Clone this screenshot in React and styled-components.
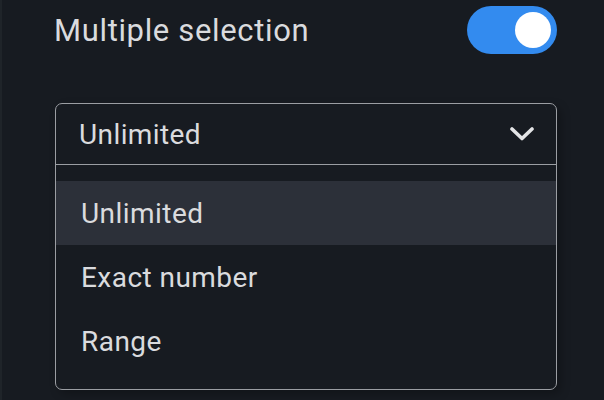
import React, { useState } from "react";
import styled, { createGlobalStyle } from "styled-components";

const GlobalStyle = createGlobalStyle`
  html, body {
    margin: 0;
    padding: 0;
    background: #171b21;
  }
  body {
    font-family: Roboto, "Noto Sans", "Liberation Sans", sans-serif;
    -webkit-font-smoothing: antialiased;
  }
`;

const Page = styled.div`
  width: 604px;
  height: 400px;
  box-sizing: border-box;
  border-left: 2px solid #1f2429;
  background: #171b21;
  padding: 0 47px 0 53px;
  overflow: hidden;
`;

const SettingRow = styled.div`
  height: 60px;
  display: flex;
  align-items: center;
  justify-content: space-between;
`;

const Label = styled.span`
  font-size: 31px;
  color: #dadbde;
  letter-spacing: 0.65px;
  margin-left: -1px;
`;

const Toggle = styled.button`
  width: 90px;
  height: 48px;
  border: none;
  border-radius: 24px;
  padding: 6px;
  display: flex;
  align-items: center;
  justify-content: ${p => (p.on ? "flex-end" : "flex-start")};
  background: ${p => (p.on ? "#338bef" : "#3a3f47")};
  cursor: pointer;
`;

const Knob = styled.span`
  width: 36px;
  height: 36px;
  border-radius: 50%;
  background: #ffffff;
`;

const Dropdown = styled.div`
  margin-top: 43px;
  height: 287px;
  box-sizing: border-box;
  border: 1.5px solid #9b9ea3;
  border-radius: 7px;
  background: #171b21;
  box-shadow: 4px 4px 10px rgba(0, 0, 0, 0.25);
  display: flex;
  flex-direction: column;
`;

const SelectHead = styled.div`
  height: 61px;
  flex-shrink: 0;
  box-sizing: border-box;
  border-bottom: 1.5px solid #9b9ea3;
  display: flex;
  align-items: center;
  justify-content: space-between;
  padding: 0 22px 0 23px;
  font-size: 28px;
  letter-spacing: 0.4px;
  color: #dadbde;
`;

const OptionList = styled.ul`
  list-style: none;
  margin: 0;
  padding: 16px 0;
`;

const Option = styled.li`
  height: 64px;
  display: flex;
  align-items: center;
  padding-left: 25px;
  font-size: 28px;
  letter-spacing: 0.45px;
  color: #dadbde;
  background: ${p => (p.active ? "#2c3039" : "transparent")};
`;

const Chevron = () => (
  <svg width="24" height="14" viewBox="0 0 24 14" fill="none">
    <path d="M2 2l10 9.5L22 2" stroke="#e3e4e6" strokeWidth="3.6" strokeLinecap="round" strokeLinejoin="round" />
  </svg>
);

const options = ["Unlimited", "Exact number", "Range"];

export default function App() {
  const [on, setOn] = useState(true);
  const [value] = useState("Unlimited");
  return (
    <Page>
      <GlobalStyle />
      <SettingRow>
        <Label>Multiple selection</Label>
        <Toggle on={on} onClick={() => setOn(!on)}>
          <Knob />
        </Toggle>
      </SettingRow>
      <Dropdown>
        <SelectHead>
          {value}
          <Chevron />
        </SelectHead>
        <OptionList>
          {options.map(o => (
            <Option key={o} active={o === value}>
              {o}
            </Option>
          ))}
        </OptionList>
      </Dropdown>
    </Page>
  );
}
